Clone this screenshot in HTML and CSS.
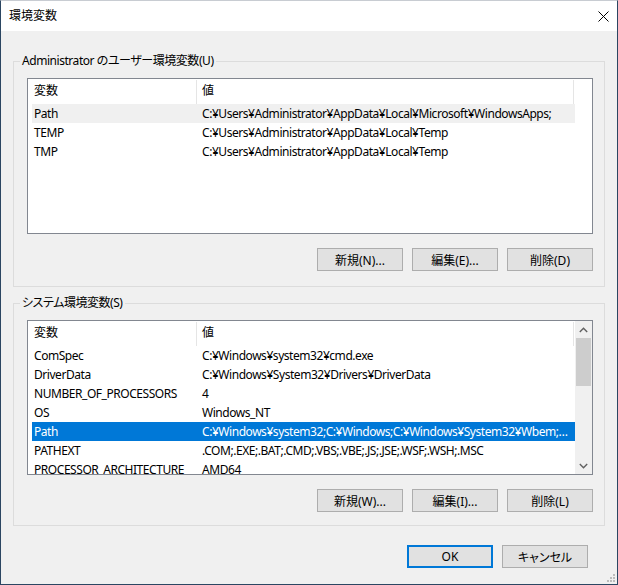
FILE: index.html
```html
<!DOCTYPE html>
<html lang="ja">
<head>
  <meta charset="UTF-8" />
  <meta name="viewport" content="width=device-width, initial-scale=1" />
  <title>環境変数</title>
  <link rel="stylesheet" href="styles.css">
</head>
<body>
  <div class="window">
    <div class="titlebar">
      <span class="title">環境変数</span>
      <svg class="close" width="11" height="11" viewBox="0 0 11 11">
        <path d="M0.5 0.5 L10.5 10.5 M10.5 0.5 L0.5 10.5" stroke="#000" stroke-width="1" fill="none" />
      </svg>
    </div>

    <div class="dialog">
      <!-- ユーザー環境変数 -->
      <fieldset class="group">
        <legend>Administrator のユーザー環境変数(U)</legend>
        <div class="listview">
          <div class="list-body">
            <div class="list-header">
              <div class="head-name">変数</div>
              <div class="head-value">値</div>
            </div>
            <div class="row idle-selected">
              <div class="cell-name">Path</div>
              <div class="cell-value">C:¥Users¥Administrator¥AppData¥Local¥Microsoft¥WindowsApps;</div>
            </div>
            <div class="row">
              <div class="cell-name">TEMP</div>
              <div class="cell-value">C:¥Users¥Administrator¥AppData¥Local¥Temp</div>
            </div>
            <div class="row">
              <div class="cell-name">TMP</div>
              <div class="cell-value">C:¥Users¥Administrator¥AppData¥Local¥Temp</div>
            </div>
          </div>
        </div>
        <div class="actions">
          <button>新規(N)...</button>
          <button>編集(E)...</button>
          <button>削除(D)</button>
        </div>
      </fieldset>

      <!-- システム環境変数 -->
      <fieldset class="group system">
        <legend>システム環境変数(S)</legend>
        <div class="listview">
          <div class="list-body">
            <div class="list-header">
              <div class="head-name">変数</div>
              <div class="head-value">値</div>
            </div>
            <div class="row">
              <div class="cell-name">ComSpec</div>
              <div class="cell-value">C:¥Windows¥system32¥cmd.exe</div>
            </div>
            <div class="row">
              <div class="cell-name">DriverData</div>
              <div class="cell-value">C:¥Windows¥System32¥Drivers¥DriverData</div>
            </div>
            <div class="row">
              <div class="cell-name">NUMBER_OF_PROCESSORS</div>
              <div class="cell-value">4</div>
            </div>
            <div class="row">
              <div class="cell-name">OS</div>
              <div class="cell-value">Windows_NT</div>
            </div>
            <div class="row selected">
              <div class="cell-name">Path</div>
              <div class="cell-value">C:¥Windows¥system32;C:¥Windows;C:¥Windows¥System32¥Wbem;C:¥Windows¥System32¥WindowsPowerShell¥v1.0¥</div>
            </div>
            <div class="row">
              <div class="cell-name">PATHEXT</div>
              <div class="cell-value">.COM;.EXE;.BAT;.CMD;.VBS;.VBE;.JS;.JSE;.WSF;.WSH;.MSC</div>
            </div>
            <div class="row">
              <div class="cell-name">PROCESSOR_ARCHITECTURE</div>
              <div class="cell-value">AMD64</div>
            </div>
          </div>
          <div class="scrollbar">
            <div class="arrow">
              <svg width="9" height="6" viewBox="0 0 9 6"><path d="M0.8 5 L4.5 1.3 L8.2 5" stroke="#606060" stroke-width="1.4" fill="none" /></svg>
            </div>
            <div class="thumb"></div>
            <div class="track"></div>
            <div class="arrow">
              <svg width="9" height="6" viewBox="0 0 9 6"><path d="M0.8 1 L4.5 4.7 L8.2 1" stroke="#606060" stroke-width="1.4" fill="none" /></svg>
            </div>
          </div>
        </div>
        <div class="actions">
          <button>新規(W)...</button>
          <button>編集(I)...</button>
          <button>削除(L)</button>
        </div>
      </fieldset>

      <div class="dialog-actions">
        <button class="default">OK</button>
        <button>キャンセル</button>
      </div>
    </div>

    <svg class="grip" width="8" height="8" viewBox="0 0 8 8">
      <rect x="6" y="0" width="2" height="2" fill="#bcbcbc" />
      <rect x="3" y="3" width="2" height="2" fill="#bcbcbc" />
      <rect x="6" y="3" width="2" height="2" fill="#bcbcbc" />
      <rect x="0" y="6" width="2" height="2" fill="#bcbcbc" />
      <rect x="3" y="6" width="2" height="2" fill="#bcbcbc" />
      <rect x="6" y="6" width="2" height="2" fill="#bcbcbc" />
    </svg>
  </div>
</body>
</html>
```

FILE: styles.css
```css
* {
  box-sizing: border-box;
}
body {
  margin: 0;
  font-family: "Noto Sans", "Noto Sans CJK JP", sans-serif;
  font-size: 12px;
  font-feature-settings: "palt";
  color: #000;
}
.window {
  position: relative;
  width: 618px;
  height: 585px;
  border: 1px solid #2b4662;
  border-top-color: #c8ccd2;
  background: #f0f0f0;
}
.titlebar {
  height: 30px;
  background: #fff;
  display: flex;
  justify-content: space-between;
  align-items: center;
  padding: 0 8px;
}
.title {
  line-height: 16px;
}
.close {
  display: block;
}
.dialog {
  padding: 22px 12px 0;
}
.group {
  margin: 0;
  padding: 9px 11px 15px 13px;
  border: 1px solid #dcdcdc;
  min-width: 0;
}
.group.system {
  margin-top: 8px;
  padding-bottom: 13px;
}
.group legend {
  padding: 0 2px;
  margin-left: -7px;
  line-height: 16px;
  letter-spacing: -0.45px;
}
.listview {
  height: 156px;
  border: 1px solid #828790;
  background: #fff;
  display: flex;
  overflow: hidden;
}
.system .listview {
  height: 155px;
}
.list-body {
  width: 547px;
  flex: none;
}
.list-header {
  display: flex;
  height: 25px;
  padding-top: 1px;
}
.head-name,
.head-value {
  height: 24px;
  line-height: 22px;
  border-right: 1px solid #e5e5e5;
}
.head-name {
  width: 169px;
  padding-left: 6px;
}
.head-value {
  width: 377px;
  padding-left: 5px;
}
.row {
  display: flex;
  height: 19px;
  line-height: 19px;
  width: 543px;
  margin-left: 4px;
  white-space: nowrap;
  letter-spacing: -0.45px;
}
.row.idle-selected {
  background: #f0f0f0;
}
.row.selected {
  background: #0078d7;
  color: #fff;
}
.cell-name {
  width: 164px;
  flex: none;
  padding-left: 2px;
  overflow: hidden;
}
.cell-value {
  flex: 1;
  min-width: 0;
  padding: 0 4px 0 6px;
  overflow: hidden;
  text-overflow: ellipsis;
}
.scrollbar {
  width: 17px;
  flex: none;
  background: #f0f0f0;
  display: flex;
  flex-direction: column;
}
.arrow {
  height: 17px;
  display: flex;
  align-items: center;
  justify-content: center;
}
.thumb {
  height: 48px;
  margin: 0 1px;
  background: #cdcdcd;
}
.track {
  flex: 1;
}
.actions {
  display: flex;
  justify-content: flex-end;
  gap: 9px;
  margin-top: 14px;
}
button {
  width: 86px;
  height: 23px;
  padding: 0;
  font-family: inherit;
  font-size: 12px;
  font-feature-settings: "palt";
  color: #000;
  background: #e1e1e1;
  border: 1px solid #adadad;
  border-radius: 0;
}
.dialog-actions {
  display: flex;
  justify-content: flex-end;
  gap: 9px;
  margin: 19px 17px 0 0;
}
button.default {
  border: 2px solid #0078d7;
}
.grip {
  position: absolute;
  right: 2px;
  bottom: 2px;
}
```
